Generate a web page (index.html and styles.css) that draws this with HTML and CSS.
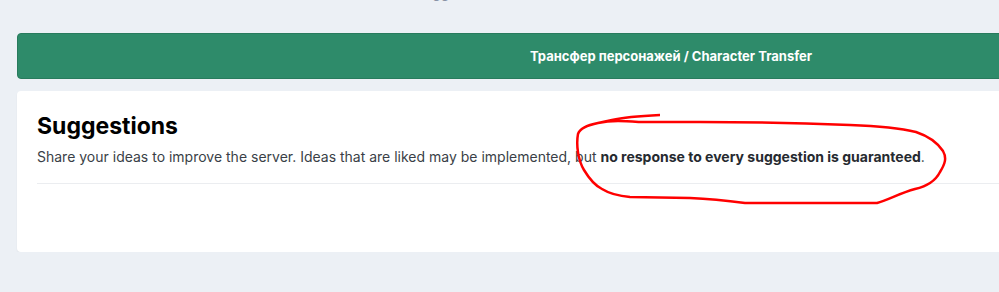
FILE: index.html
```html
<!DOCTYPE HTML>
<html>
	<head>
		<meta charset='utf-8' />
		<title>Suggestions</title>
		<link rel="stylesheet" href="styles.css">
	</head>
	<body>
		<div class='page'>
			<div class='crumb'>Suggestions</div>
			<a class='transfer' href='#'>Трансфер персонажей / Character Transfer</a>
			<div class='card'>
				<h1 class='title'>Suggestions</h1>
				<p class='lead'>Share your ideas to improve the server. Ideas that are liked may be implemented, but <b>no response to every suggestion is guaranteed</b>.</p>
				<hr class='line' />
				<div class='list'></div>
			</div>
		</div>
		<svg class='scribble' width='999' height='292' viewBox='0 0 999 292'>
			<path d='M660 115 C640 116 625 117 612 120 L598 123 C588 125 580 128 578 134 C576 145 578 160 584 170 C590 180 596 186 602 189 C610 194 618 196 630 197 L690 198 C715 199 730 201 745 203 L877 203 C888 200 900 193 915 189 C928 186 936 180 940 172 C945 164 947 158 943 151 C937 142 928 136 916 132 C900 128 880 126 850 125 C800 123 750 122 700 122 L640 122 C625 121 612 120 598 123' />
		</svg>
	</body>
</html>
```

FILE: styles.css
```css
body{
	margin:0;
	background:#ecf0f5;
	font-family:Inter, "Noto Sans", sans-serif;
	overflow:hidden;
}

.page{
	width:1308px;
	margin-left:17px;
}
.crumb{
	height:20px;
	margin-top:-17px;
	margin-bottom:30px;
	padding-left:398px;
	font-size:14px;
	line-height:20px;
	color:#8a93a6;
}

.transfer{
	display:block;
	height:44px;
	line-height:44px;
	text-align:center;
	background:#2e8b6a;
	border:1px solid #287b5d;
	border-radius:4px;
	color:#fff;
	font-size:13px;
	font-weight:700;
	text-decoration:none;
}

.card{
	margin-top:12px;
	padding:21px 20px 0;
	height:140px;
	background:#fff;
	border-radius:4px;
	box-shadow:0 1px 2px rgba(0,0,0,0.06);
}
.title{
	margin:0;
	font-size:23px;
	line-height:28px;
	font-weight:700;
	color:#000;
}
.lead{
	margin:7px 0 0;
	font-size:14px;
	line-height:20px;
	color:#3a3f47;
}
.lead b{
	color:#262a30;
}
.line{
	margin:16px 0 0;
	border:0;
	border-top:1px solid #ebedf0;
}

.scribble{
	position:absolute;
	top:0;
	left:0;
	pointer-events:none;
}
.scribble path{
	fill:none;
	stroke:#ff0000;
	stroke-width:2.5;
	stroke-linejoin:round;
}
```
